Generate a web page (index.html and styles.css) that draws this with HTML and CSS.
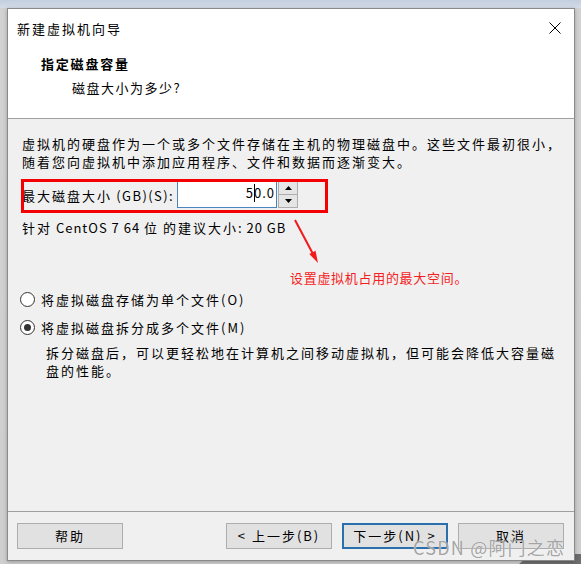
FILE: index.html
```html
<!DOCTYPE html>
<html lang="zh-CN">
<head>
<meta charset="utf-8">
<title>新建虚拟机向导</title>
<link rel="stylesheet" href="styles.css">
</head>
<body>
<div class="desktop">
  <div class="corner"></div>
  <div class="dialog">
    <div class="titlebar">
      <span class="title">新建虚拟机向导</span>
      <svg class="close" width="12" height="12" viewBox="0 0 12 12"><path d="M0.5 0.5 L11.5 11.5 M11.5 0.5 L0.5 11.5" stroke="#000" stroke-width="1" fill="none"/></svg>
    </div>
    <div class="header">
      <div class="h-title">指定磁盘容量</div>
      <div class="h-sub">磁盘大小为多少?</div>
    </div>
    <div class="content">
      <p class="intro">虚拟机的硬盘作为一个或多个文件存储在主机的物理磁盘中。这些文件最初很小，<br>随着您向虚拟机中添加应用程序、文件和数据而逐渐变大。</p>
      <div class="size-row">
        <span class="size-label">最大磁盘大小<span class="lat-wide"> (GB)(S):</span></span>
        <div class="spin-input"><span class="value">5<span class="caret"></span>0.0</span></div>
        <div class="spin">
          <div class="spin-btn"><svg width="7" height="4" viewBox="0 0 7 4"><path d="M3.5 0 L7 4 L0 4 Z" fill="#000"/></svg></div>
          <div class="spin-btn"><svg width="7" height="4" viewBox="0 0 7 4"><path d="M0 0 L7 0 L3.5 4 Z" fill="#000"/></svg></div>
        </div>
      </div>
      <div class="hint">针对<span class="lat"> CentOS 7 64 </span>位<span class="lat"> </span>的建议大小<span class="lat">: 20 GB</span></div>
      <div class="note">设置虚拟机占用的最大空间。</div>
      <div class="option first"><span class="radio"></span><span>将虚拟磁盘存储为单个文件(O)</span></div>
      <div class="option second"><span class="radio checked"></span><span>将虚拟磁盘拆分成多个文件(M)</span></div>
      <p class="desc">拆分磁盘后，可以更轻松地在计算机之间移动虚拟机，但可能会降低大容量磁<br>盘的性能。</p>

      <div class="redbox"></div>
      <svg class="arrow" width="40" height="54" viewBox="0 0 40 54">
        <line x1="7" y1="5" x2="25" y2="39" stroke="#f21a1a" stroke-width="2"/>
        <polygon points="30,48 27.5,35.8 21.3,39" fill="#f21a1a"/>
      </svg>
    </div>
    <div class="footer">
      <button class="btn">帮助</button>
      <div class="btn-group">
        <button class="btn">&lt; 上一步(B)</button>
        <button class="btn default">下一步(N) &gt;</button>
        <button class="btn">取消</button>
      </div>
    </div>
  </div>
  <div class="watermark">CSDN @阿门之恋</div>
</div>
</body>
</html>
```
FILE: styles.css
```css
* { box-sizing: border-box; }
html, body { margin: 0; padding: 0; }
body {
  width: 581px;
  height: 564px;
  overflow: hidden;
  font-family: "Noto Sans CJK SC", "Noto Sans", sans-serif;
  font-size: 13px;
  letter-spacing: 2px;
  color: #000;
}
.desktop {
  position: relative;
  width: 581px;
  height: 564px;
  padding: 8px 6px 0 7px;
  background: linear-gradient(to bottom, #c3cede 0, #d4dce8 8px, #d2d2d2 8px, #cfcfcf 100%);
}
.corner {
  position: absolute;
  right: 0;
  bottom: 0;
  width: 62px;
  height: 10px;
  background: #6e6e6e;
  clip-path: polygon(0 100%, 12px 0, 100% 0, 100% 100%);
}
.dialog {
  position: relative;
  width: 568px;
  height: 553px;
  background: #f0f0f0;
  border: 1px solid #8a8a8a;
  display: flex;
  flex-direction: column;
  box-shadow: 0 1px 4px rgba(0, 0, 0, 0.25);
}
.titlebar {
  height: 38px;
  flex: none;
  background: #fff;
  display: flex;
  align-items: center;
  justify-content: space-between;
  padding: 0 13px 0 9px;
}
.close { display: block; }
.header {
  height: 72px;
  flex: none;
  background: #fff;
  border-bottom: 1px solid #a0a0a0;
  padding: 8px 0 0 33px;
}
.h-title {
  font-weight: bold;
  line-height: 18px;
  letter-spacing: 1.8px;
}
.h-sub {
  margin-top: 6px;
  padding-left: 31px;
  line-height: 18px;
  letter-spacing: 1.5px;
}
.content {
  position: relative;
  flex: 1;
  padding: 16px 0 0 14px;
}
.intro {
  margin: 0;
  line-height: 18px;
}
.lat { letter-spacing: 1px; }
.lat-wide { letter-spacing: 1.4px; }
.size-row {
  display: flex;
  align-items: center;
  margin-top: 9px;
  height: 28px;
}
.size-label {
  width: 155px;
  flex: none;
  white-space: nowrap;
  padding-top: 2px;
}
.spin-input {
  width: 100px;
  height: 28px;
  flex: none;
  background: #fff;
  border: 1px solid #4a86bd;
  text-align: right;
  padding-right: 1px;
  line-height: 24px;
  letter-spacing: 1px;
}
.value { position: relative; }
.caret {
  display: inline-block;
  width: 1px;
  height: 18px;
  background: #000;
  vertical-align: -4px;
  margin: 0 -1px 0 0;
}
.spin {
  width: 20px;
  height: 27px;
  flex: none;
  margin-left: 1px;
  border: 1px solid #adadad;
  background: #e5e5e5;
  display: flex;
  flex-direction: column;
}
.spin-btn {
  flex: 1;
  display: flex;
  align-items: center;
  justify-content: center;
}
.spin-btn + .spin-btn { border-top: 1px solid #adadad; }
.spin-btn svg { display: block; }
.hint {
  margin-top: 11px;
  line-height: 18px;
}
.note {
  margin-top: 32px;
  margin-left: 268px;
  line-height: 18px;
  color: #f41e1e;
  letter-spacing: 0.7px;
}
.option {
  display: flex;
  align-items: center;
  height: 22px;
  margin-left: -2px;
}
.option.first { margin-top: 1px; }
.option.second { margin-top: 6px; }
.radio {
  position: relative;
  width: 15px;
  height: 15px;
  margin-right: 6px;
  border: 1px solid #333;
  border-radius: 50%;
  background: #fff;
  flex: none;
}
.radio.checked::after {
  content: "";
  position: absolute;
  left: 3px;
  top: 3px;
  width: 7px;
  height: 7px;
  border-radius: 50%;
  background: #333;
}
.desc {
  margin: 6px 0 0 24px;
  line-height: 18px;
}
.redbox {
  position: absolute;
  left: 13px;
  top: 60px;
  width: 307px;
  height: 34px;
  border: 3px solid #f50000;
}
.arrow {
  position: absolute;
  left: 280px;
  top: 96px;
}
.footer {
  height: 49px;
  flex: none;
  border-top: 1px solid #a0a0a0;
  padding: 11px 10px 11px 9px;
  display: flex;
  justify-content: space-between;
}
.btn-group {
  display: flex;
  gap: 10px;
}
.btn {
  width: 106px;
  height: 26px;
  padding: 0;
  margin: 0;
  border: 1px solid #adadad;
  background: #e1e1e1;
  font-family: inherit;
  font-size: 13px;
  letter-spacing: 2px;
  color: #000;
  line-height: 22px;
  text-align: center;
}
.btn.default { border: 2px solid #2c6fad; }
.watermark {
  position: absolute;
  left: 413px;
  top: 536px;
  font-size: 18px;
  line-height: 22px;
  letter-spacing: 1.2px;
  color: rgba(140, 140, 140, 0.8);
  text-shadow: 0 0 1px #fff;
  white-space: nowrap;
}
```
